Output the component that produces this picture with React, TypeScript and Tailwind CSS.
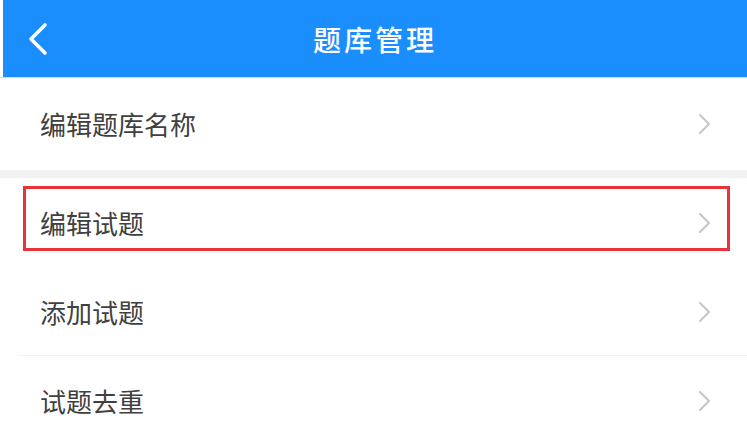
const rows = ['编辑题库名称', '编辑试题', '添加试题', '试题去重']

function BackIcon() {
  return (
    <svg width="24" height="34" viewBox="0 0 24 34" fill="none">
      <path d="M19 3 L5 17 L19 31" stroke="white" strokeWidth="3.6" strokeLinecap="round" strokeLinejoin="round" />
    </svg>
  )
}

function Arrow() {
  return (
    <svg width="14" height="22" viewBox="0 0 14 22" fill="none" className="mr-[35px]">
      <path d="M2 2 L11 11 L2 20" stroke="#c6c6c6" strokeWidth="2" strokeLinecap="round" strokeLinejoin="round" />
    </svg>
  )
}

function Row({ label, highlight, divider }: { label: string; highlight?: boolean; divider?: boolean }) {
  return (
    <div className="relative h-[89px] flex items-center bg-white">
      <span className="pl-[40px] flex-1 text-[26px] text-[#404040] leading-none">{label}</span>
      <Arrow />
      {highlight && (
        <div className="absolute left-[23px] right-[17px] top-[8px] bottom-[16px] border-[3px] border-[#e8333a]" />
      )}
      {divider && <div className="absolute left-[17px] right-0 bottom-0 h-px bg-[#f2f2f2]" />}
    </div>
  )
}

export default function App() {
  return (
    <div className="w-[747px] h-[445px] overflow-hidden bg-white" style={{ fontFamily: '"Noto Sans CJK SC", sans-serif' }}>
      {/* Header */}
      <div className="ml-[3px] h-[77px] bg-[#1b8efe] flex items-center relative">
        <div className="pl-[23px]">
          <BackIcon />
        </div>
        <div className="absolute inset-0 flex items-center justify-center">
          <span className="text-white text-[28px] font-medium tracking-[3px]">题库管理</span>
        </div>
      </div>
      <div className="h-px bg-[#bfe0ff]" />

      <div className="h-[92px] flex items-center bg-white">
        <span className="pl-[40px] flex-1 text-[26px] text-[#404040] leading-none">{rows[0]}</span>
        <Arrow />
      </div>
      <div className="h-[8px] bg-[#f2f2f4]" />

      <Row label={rows[1]} highlight />
      <Row label={rows[2]} divider />
      <Row label={rows[3]} />
    </div>
  )
}
